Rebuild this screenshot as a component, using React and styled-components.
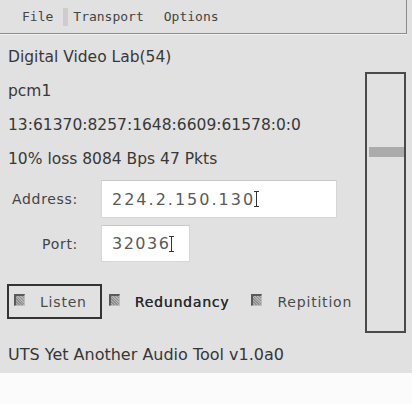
import React from "react";
import styled, { createGlobalStyle } from "styled-components";

const Global = createGlobalStyle`
  html, body { margin: 0; padding: 0; background: #fbfbfb; }
  body { font-family: "DejaVu Sans", "Liberation Sans", sans-serif; }
`;

const Window = styled.div`
  width: 412px;
  height: 373px;
  background: #e1e1e1;
  display: flex;
  flex-direction: column;
  color: #333;
`;

const MenuBar = styled.div`
  width: 407px;
  height: 34px;
  box-sizing: border-box;
  border-bottom: 1px solid #8c8c8c;
  border-right: 1px solid #8c8c8c;
  box-shadow: 0 1px 0 #f2f2f2;
  display: flex;
  align-items: center;
  padding-left: 22px;
  font-family: "DejaVu Sans Mono", "Liberation Mono", monospace;
  font-size: 13px;
  color: #444;
  flex: none;
`;

const MenuItem = styled.span`
  margin-right: ${(p) => p.$gap || 0}px;
`;

const MenuSep = styled.span`
  width: 5px;
  height: 18px;
  background: #cdcdcd;
  margin-right: 5px;
`;

const Body = styled.div`
  display: flex;
  align-items: flex-start;
  flex: none;
`;

const Main = styled.div`
  flex: 1;
  min-width: 0;
  padding: 6px 0 0 8px;
  display: flex;
  flex-direction: column;
`;

const InfoLine = styled.div`
  height: 34px;
  line-height: 34px;
  font-size: 15.5px;
  color: #383838;
  white-space: nowrap;
`;

const FieldRow = styled.div`
  display: flex;
  align-items: center;
  margin-top: ${(p) => p.$top}px;
`;

const FieldLabel = styled.label`
  width: 70px;
  text-align: right;
  font-size: 14px;
  letter-spacing: 0.7px;
  color: #444;
  margin-right: 23px;
`;

const FieldBox = styled.div`
  width: ${(p) => p.$w}px;
  height: ${(p) => p.$h}px;
  box-sizing: border-box;
  background: #fff;
  border: 1px solid #d6d6d6;
  border-top-color: #c8c8c8;
  display: flex;
  align-items: center;
  padding-left: 10px;
  font-size: 16px;
  letter-spacing: ${(p) => p.$ls}px;
  color: #5a5a5a;
`;

const Caret = styled.span`
  display: inline-block;
  width: 5px;
  height: 16px;
  margin-left: -1px;
  border-top: 1px solid #333;
  border-bottom: 1px solid #333;
  box-sizing: border-box;
  background: linear-gradient(#333, #333) center / 1px 100% no-repeat;
`;

const CheckRow = styled.div`
  display: flex;
  margin: 22px 0 0 -1px;
`;

const CheckItem = styled.div`
  height: 35px;
  box-sizing: border-box;
  border: 2px solid ${(p) => (p.$focused ? "#333" : "transparent")};
  padding: 0 13px 0 5px;
  display: flex;
  align-items: center;
  gap: 15px;
`;

const CheckBox = styled.span`
  width: 11px;
  height: 12px;
  box-sizing: border-box;
  border-top: 2px solid #5a5a5a;
  border-left: 2px solid #5a5a5a;
  border-right: 1px solid #bcbcbc;
  border-bottom: 1px solid #bcbcbc;
  background: repeating-linear-gradient(45deg, #8e8e8e 0 1px, #b4b4b4 1px 2px);
  margin-top: -3px;
`;

const CheckLabel = styled.span`
  font-size: 14px;
  letter-spacing: 0.8px;
  color: ${(p) => (p.$strong ? "#2a2a2a" : "#4a4a4a")};
  text-shadow: ${(p) => (p.$strong ? "0.2px 0 0 #2a2a2a" : "none")};
`;

const Side = styled.div`
  flex: none;
  width: 41px;
  height: 261px;
  box-sizing: border-box;
  margin: 38px 6px 0 0;
  border: 2px solid #4a4a4a;
  padding-top: 73px;
  padding-left: 2px;
`;

const Thumb = styled.div`
  height: 10px;
  background: #ababab;
`;

const Status = styled.div`
  height: 39px;
  box-sizing: border-box;
  padding: 5px 0 0 8px;
  line-height: 33px;
  font-size: 16px;
  color: #363636;
  flex: none;
`;

export default function App() {
  return (
    <>
      <Global />
      <Window>
        <MenuBar>
          <MenuItem $gap={10}>File</MenuItem>
          <MenuSep />
          <MenuItem $gap={20}>Transport</MenuItem>
          <MenuItem>Options</MenuItem>
        </MenuBar>
        <Body>
          <Main>
            <InfoLine>Digital Video Lab(54)</InfoLine>
            <InfoLine>pcm1</InfoLine>
            <InfoLine>13:61370:8257:1648:6609:61578:0:0</InfoLine>
            <InfoLine>10% loss 8084 Bps 47 Pkts</InfoLine>
            <FieldRow $top={4}>
              <FieldLabel>Address:</FieldLabel>
              <FieldBox $w={236} $h={38} $ls={2}>
                224.2.150.130
                <Caret />
              </FieldBox>
            </FieldRow>
            <FieldRow $top={7}>
              <FieldLabel>Port:</FieldLabel>
              <FieldBox $w={89} $h={37} $ls={1.5}>
                32036
                <Caret />
              </FieldBox>
            </FieldRow>
            <CheckRow>
              <CheckItem $focused>
                <CheckBox />
                <CheckLabel>Listen</CheckLabel>
              </CheckItem>
              <CheckItem>
                <CheckBox />
                <CheckLabel $strong>Redundancy</CheckLabel>
              </CheckItem>
              <CheckItem>
                <CheckBox />
                <CheckLabel>Repitition</CheckLabel>
              </CheckItem>
            </CheckRow>
          </Main>
          <Side>
            <Thumb />
          </Side>
        </Body>
        <Status>UTS Yet Another Audio Tool v1.0a0</Status>
      </Window>
    </>
  );
}
